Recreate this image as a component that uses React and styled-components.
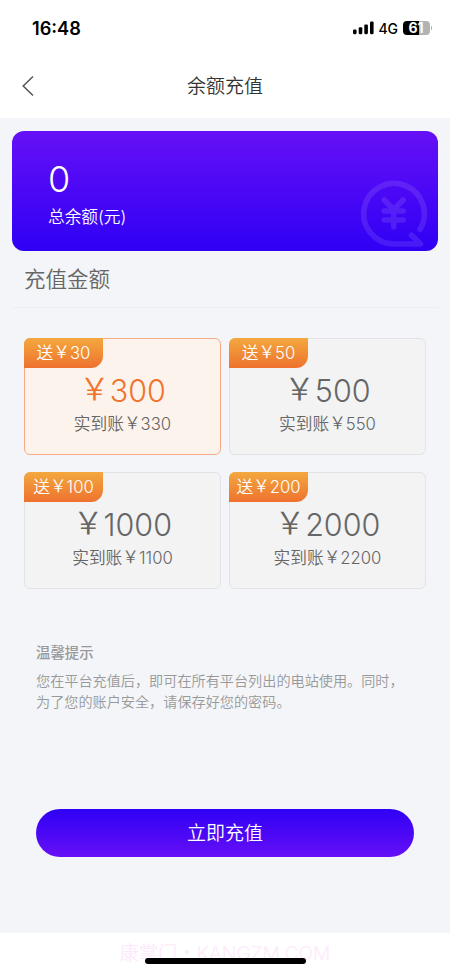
import React, { useState } from "react";
import styled, { createGlobalStyle } from "styled-components";

// full-width yen sign
const YEN = "\uFFE5";

const plans = [
  { price: "300", gift: "30", total: "330" },
  { price: "500", gift: "50", total: "550" },
  { price: "1000", gift: "100", total: "1100" },
  { price: "2000", gift: "200", total: "2200" },
];

const StatusIcons = () => {
  return (
    <StatusRight>
      <svg width="21" height="14" viewBox="0 0 21 14">
        <rect x="0" y="8.6" width="3.6" height="4.6" rx="1.1" />
        <rect x="5.7" y="6.2" width="3.6" height="7" rx="1.1" />
        <rect x="11.3" y="3.4" width="3.6" height="9.8" rx="1.1" />
        <rect x="17" y="0.5" width="3.6" height="12.7" rx="1.1" />
      </svg>
      <Network>4G</Network>
      <Battery>61</Battery>
      <BatteryTip />
    </StatusRight>
  );
};

const YenIcon = () => {
  return (
    <CardIcon viewBox="0 0 68 68">
      <path d="M60 49.3A30.3 30.3 0 1 0 33.5 64H60.5L51.5 55.3" />
      <path d="M24.3 20L33.7 29.5L43.1 20M24.3 31H43.1M24.3 40H43.1M33.7 29.5V47" />
    </CardIcon>
  );
};

const Plan = ({ plan, active, onClick }) => {
  return (
    <PlanCard $active={active} onClick={onClick}>
      <Gift>
        送<Yen>{YEN}</Yen>
        {plan.gift}
      </Gift>
      <Price $active={active}>
        <Yen>{YEN}</Yen>
        {plan.price}
      </Price>
      <Total>
        实到账<Yen>{YEN}</Yen>
        {plan.total}
      </Total>
    </PlanCard>
  );
};

const App = () => {
  const [selected, setSelected] = useState(0);

  return (
    <Page>
      <GlobalStyle />
      <StatusBar>
        <Time>16:48</Time>
        <StatusIcons />
      </StatusBar>
      <NavBar>
        <BackButton aria-label="返回">
          <svg width="12" height="22" viewBox="0 0 12 22">
            <path d="M11 1.5L1.2 11L11 20.5" />
          </svg>
        </BackButton>
        <NavTitle>余额充值</NavTitle>
      </NavBar>
      <Content>
        <BalanceCard>
          <Balance>0</Balance>
          <BalanceLabel>总余额(元)</BalanceLabel>
          <YenIcon />
        </BalanceCard>
        <SectionTitle>充值金额</SectionTitle>
        <PlanGrid>
          {plans.map((plan, i) => (
            <Plan
              key={plan.price}
              plan={plan}
              active={i === selected}
              onClick={() => setSelected(i)}
            />
          ))}
        </PlanGrid>
        <Tips>
          <TipsTitle>温馨提示</TipsTitle>
          <TipsText>
            您在平台充值后，即可在所有平台列出的电站使用。同时，
            <br />
            为了您的账户安全，请保存好您的密码。
          </TipsText>
        </Tips>
        <SubmitButton>立即充值</SubmitButton>
      </Content>
      <Footer>
        <Watermark>康掌门・KANGZM.COM</Watermark>
        <HomeIndicator />
      </Footer>
    </Page>
  );
};

export default App;

const GlobalStyle = createGlobalStyle`
  * {
    box-sizing: border-box;
  }

  body {
    margin: 0;
    font-family: Inter, "Noto Sans CJK SC", sans-serif;
    font-weight: 350;
    color: #666;
  }

  button {
    border: 0;
    padding: 0;
    background: none;
    font: inherit;
    cursor: pointer;
  }
`;

const Page = styled.div`
  display: flex;
  flex-direction: column;
  width: 100%;
  height: 974px;
  overflow: hidden;
  background: #fff;
`;

const StatusBar = styled.div`
  display: flex;
  justify-content: space-between;
  height: 56px;
  padding: 0 18px 0 32px;
  color: #000;
`;

const Time = styled.div`
  line-height: 57px;
  font-size: 18.2px;
  font-weight: 600;
`;

const StatusRight = styled.div`
  display: flex;
  align-items: center;
  height: 56px;
`;

const Network = styled.span`
  margin-left: 5px;
  width: 24px;
  font-size: 14px;
  font-weight: 450;
  letter-spacing: -0.2px;
`;

const Battery = styled.div`
  width: 27px;
  height: 14px;
  border-radius: 4px;
  background: linear-gradient(90deg, #000 61%, #b3b3b3 61%);
  color: #fff;
  font-size: 14px;
  font-weight: 700;
  line-height: 14px;
  text-align: center;
`;

const BatteryTip = styled.div`
  width: 1.5px;
  height: 4px;
  margin-left: 1px;
  border-radius: 0 2px 2px 0;
  background: #b3b3b3;
`;

const NavBar = styled.div`
  display: grid;
  grid-template-columns: 60px 1fr 60px;
  align-items: center;
  height: 62px;
  padding-bottom: 2px;
`;

const BackButton = styled.button`
  display: flex;
  padding-left: 22px;

  path {
    fill: none;
    stroke: #555;
    stroke-width: 1.5;
  }
`;

const NavTitle = styled.div`
  padding-bottom: 3px;
  color: #333;
  font-size: 19px;
  text-align: center;
`;

const Content = styled.div`
  display: flex;
  flex-direction: column;
  height: 815px;
  padding: 13px 12px 0;
  background: #f3f5f8;
`;

const BalanceCard = styled.div`
  position: relative;
  height: 120px;
  padding: 25px 36px 0;
  border-radius: 12px;
  background: linear-gradient(180deg, #6610f6, #2f00f5);
  color: #fff;
`;

const Balance = styled.div`
  font-size: 36px;
  line-height: 46px;
`;

const BalanceLabel = styled.div`
  font-size: 16.7px;
  line-height: 30px;
`;

const CardIcon = styled.svg`
  position: absolute;
  right: 10px;
  bottom: 3px;
  width: 68px;
  height: 68px;
  fill: none;
  stroke: #fff;
  stroke-width: 5.6;
  stroke-linecap: round;
  stroke-linejoin: round;
  opacity: 0.1;
`;

const SectionTitle = styled.div`
  height: 57px;
  padding-left: 12px;
  border-bottom: 1px solid #f0efef;
  font-size: 21.5px;
  line-height: 57px;
`;

const PlanGrid = styled.div`
  display: grid;
  grid-template-columns: 1fr 1fr;
  gap: 17px 8px;
  padding: 30px 12px 0;
`;

const PlanCard = styled.div`
  display: flex;
  flex-direction: column;
  align-items: center;
  height: 117px;
  border: 1px solid ${({ $active }) => ($active ? "#f5ab86" : "#e2e3e6")};
  border-radius: 6px;
  background: ${({ $active }) => ($active ? "#fdf3ed" : "#f3f3f4")};
  cursor: pointer;
`;

const Yen = styled.span`
  line-height: 1;
  vertical-align: 0.05em;
`;

const Gift = styled.div`
  align-self: flex-start;
  width: 79px;
  height: 30px;
  margin: -1px 0 0 -1px;
  border-radius: 6px 0 12px 0;
  background: linear-gradient(180deg, #f3a83f, #ee722e);
  color: #fff;
  font-size: 16.7px;
  line-height: 30px;
  text-align: center;
`;

const Price = styled.div`
  height: 44px;
  color: ${({ $active }) => ($active ? "#f0742d" : "#666")};
  font-size: 30.5px;
  line-height: 45px;
`;

const Total = styled.div`
  font-size: 16.7px;
  line-height: 25px;
`;

const Tips = styled.div`
  padding: 53px 24px 0;
  color: #999;
  font-size: 14.4px;
  line-height: 21.5px;
`;

const TipsTitle = styled.div`
  margin-bottom: 6px;
  font-weight: 500;
`;

const TipsText = styled.div`
  font-size: 14.15px;
  white-space: nowrap;
`;

const SubmitButton = styled.button`
  height: 48px;
  margin: 96px 24px 0;
  padding-bottom: 2px;
  border-radius: 24px;
  background: linear-gradient(180deg, #2f00f5, #6610f6);
  color: #fff;
  font-size: 19px;
`;

const Footer = styled.div`
  position: relative;
  display: flex;
  justify-content: center;
  height: 41px;
`;

const Watermark = styled.div`
  color: #fdeafb;
  font-size: 19.2px;
  line-height: 40px;
`;

const HomeIndicator = styled.div`
  position: absolute;
  left: 145px;
  bottom: 10px;
  width: 161px;
  height: 6px;
  border-radius: 3px;
  background: #000;
`;
